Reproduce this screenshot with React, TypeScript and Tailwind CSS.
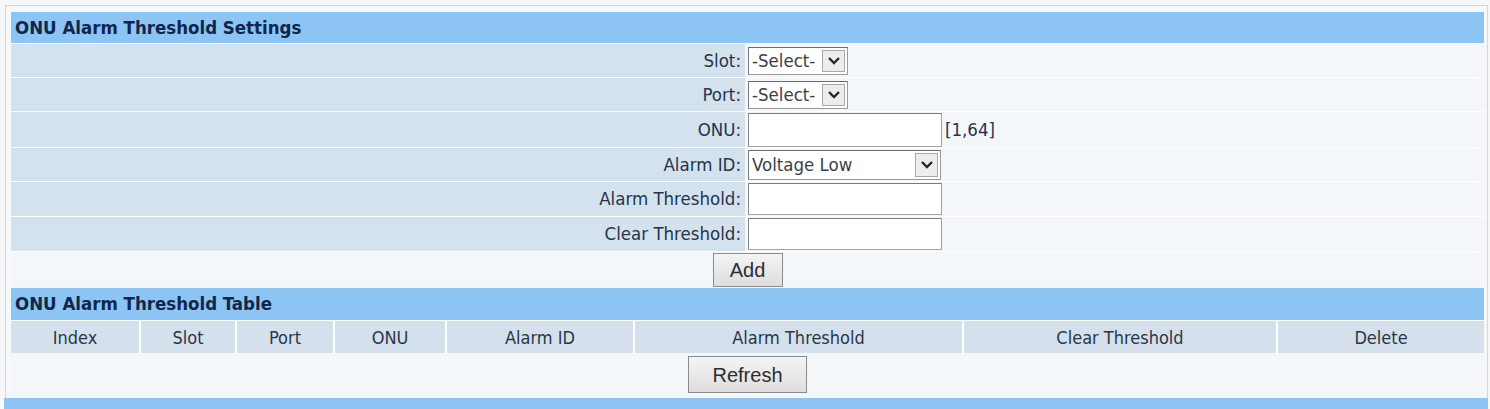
import React from 'react'

const font = "font-['DejaVu_Sans_Condensed','DejaVu_Sans','Liberation_Sans',sans-serif]"

function Chevron(): JSX.Element {
  return (
    <svg width="14" height="9" viewBox="0 0 14 9">
      <polyline points="2,2 7,7 12,2" fill="none" stroke="#1f2a36" strokeWidth="2.4" />
    </svg>
  )
}

function Select({ value, width, height }: { value: string; width: string; height: string }): JSX.Element {
  return (
    <div
      className={`flex items-stretch border border-[#9a9a9a] border-t-[#6e6e6e] border-l-[#7a7a7a] bg-white ${width} ${height}`}
    >
      <span className="flex flex-1 items-center pl-[3px] text-[18.5px] text-[#3a3f46]">{value}</span>
      <span className="m-[2px] flex w-[23px] items-center justify-center border border-[#a9a9a9] bg-[#ededed]">
        <Chevron />
      </span>
    </div>
  )
}

function TextInput({ height }: { height: string }): JSX.Element {
  return (
    <div
      className={`w-[194px] border border-[#a3a3a3] border-t-[#7c7c7c] border-l-[#8a8a8a] bg-white ${height}`}
    />
  )
}

function FormRow({ label, h, children }: { label: string; h: string; children: React.ReactNode }): JSX.Element {
  return (
    <div className={`grid grid-cols-[734px_1fr] ${h}`}>
      <div className="flex items-center justify-end bg-[#d4e2ee] pr-[4px] text-[18.5px] text-[#25344a]">{label}</div>
      <div className="flex items-center gap-[3px] bg-[#f4f7fa] pl-[3px]">{children}</div>
    </div>
  )
}

function OldButton({ label, className }: { label: string; className: string }): JSX.Element {
  return (
    <button
      className={`border border-[#8c8c8c] bg-gradient-to-b from-[#f4f4f4] to-[#dedede] font-['Liberation_Sans',Arial,sans-serif] text-[20px] text-[#2e2e2e] ${className}`}
    >
      {label}
    </button>
  )
}

const columns = ['Index', 'Slot', 'Port', 'ONU', 'Alarm ID', 'Alarm Threshold', 'Clear Threshold', 'Delete']

export default function App(): JSX.Element {
  return (
    <div className={`h-[409px] w-[1490px] overflow-hidden bg-[#f6f8fa] pt-[5px] ${font}`}>
      <div className="ml-[5px] w-[1483px] border border-b-0 border-[#cfd9e3] pl-[5px] pr-[3px] pt-[6px]">
        {/* Settings */}
        <div className="flex h-[31px] items-center bg-[#8cc4f3] pl-[4px] text-[18.5px] font-bold text-[#10264a]">
          ONU Alarm Threshold Settings
        </div>
        <div className="flex flex-col gap-[1px] bg-white pt-[1px]">
          <FormRow label="Slot:" h="h-[33px]">
            <Select value="-Select-" width="w-[100px]" height="h-[28px]" />
          </FormRow>
          <FormRow label="Port:" h="h-[33px]">
            <Select value="-Select-" width="w-[100px]" height="h-[28px]" />
          </FormRow>
          <FormRow label="ONU:" h="h-[35px]">
            <TextInput height="h-[34px]" />
            <span className="text-[18.5px] text-[#25344a]">[1,64]</span>
          </FormRow>
          <FormRow label="Alarm ID:" h="h-[33px]">
            <Select value="Voltage Low" width="w-[193px]" height="h-[30px]" />
          </FormRow>
          <FormRow label="Alarm Threshold:" h="h-[34px]">
            <TextInput height="h-[32px]" />
          </FormRow>
          <FormRow label="Clear Threshold:" h="h-[34px]">
            <TextInput height="h-[32px]" />
          </FormRow>
          <div className="flex h-[36px] items-start justify-center bg-[#f4f7fa] pt-[1px]">
            <OldButton label="Add" className="h-[34px] w-[70px]" />
          </div>
        </div>

        {/* Table */}
        <div className="flex h-[32px] items-center bg-[#8cc4f3] pl-[4px] text-[18.5px] font-bold text-[#10264a]">
          ONU Alarm Threshold Table
        </div>
        <div className="grid h-[33px] grid-cols-[128px_94px_96px_110px_186px_327px_312px_1fr] gap-x-[2px] border-t border-white bg-white">
          {columns.map((c) => (
            <div key={c} className="flex items-center justify-center bg-[#d4e1ec] text-[18px] text-[#2b3647]">
              {c}
            </div>
          ))}
        </div>
        <div className="flex h-[45px] items-start justify-center bg-[#f4f7fa] pt-[3px]">
          <OldButton label="Refresh" className="h-[37px] w-[119px]" />
        </div>
      </div>
      <div className="ml-[4px] h-[12px] w-[1484px] bg-[#8cc4f3]" />
    </div>
  )
}
